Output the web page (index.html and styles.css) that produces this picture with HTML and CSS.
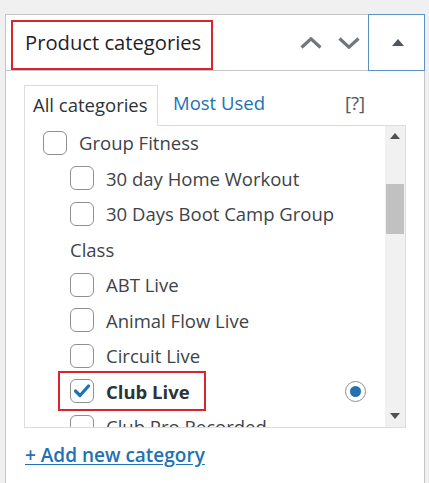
FILE: index.html
```html
<!DOCTYPE html>
<html lang="en">
<head>
<meta charset="utf-8">
<title>Product categories</title>
<link rel="stylesheet" href="styles.css">
</head>
<body>
<div class="postbox">
  <div class="postbox-header">
    <div class="title-wrap"><h2 class="hndle">Product categories</h2></div>
    <div class="actions">
      <button class="order-btn up" aria-label="Move up">
        <svg width="22" height="12" viewBox="0 0 22 12"><polyline points="1.5,10.5 11,1.8 20.5,10.5" fill="none" stroke="#72777c" stroke-width="3.2"/></svg>
      </button>
      <button class="order-btn down" aria-label="Move down">
        <svg width="22" height="12" viewBox="0 0 22 12"><polyline points="1.5,1.5 11,10.2 20.5,1.5" fill="none" stroke="#72777c" stroke-width="3.2"/></svg>
      </button>
      <button class="toggle-btn" aria-label="Toggle panel">
        <svg width="12" height="7" viewBox="0 0 12 7"><polygon points="6,0 12,7 0,7" fill="#50575e"/></svg>
      </button>
    </div>
  </div>
  <div class="inside">
    <ul class="tabs">
      <li class="tab active">All categories</li>
      <li class="tab"><a class="tab-link" href="#">Most Used</a></li>
      <li class="help">[?]</li>
    </ul>
    <div class="tabs-panel">
      <div class="viewport">
        <ul class="checklist">
          <li class="row"><span class="cb"></span><span class="label">Group Fitness</span></li>
          <li class="row lvl1"><span class="cb"></span><span class="label">30 day Home Workout</span></li>
          <li class="row lvl1"><span class="cb"></span><span class="label">30 Days Boot Camp Group</span></li>
          <li class="row lvl1"><span class="plain">Class</span></li>
          <li class="row lvl1"><span class="cb"></span><span class="label">ABT Live</span></li>
          <li class="row lvl1"><span class="cb"></span><span class="label">Animal Flow Live</span></li>
          <li class="row lvl1"><span class="cb"></span><span class="label">Circuit Live</span></li>
          <li class="row lvl1 selected">
            <span class="highlight">
              <span class="cb checked"><svg width="22" height="22" viewBox="0 0 22 22"><polyline points="4.5,11 9,15.5 17.5,6" fill="none" stroke="#2271b1" stroke-width="3.2" stroke-linecap="round" stroke-linejoin="round"/></svg></span>
              <span class="label bold">Club Live</span>
            </span>
            <span class="radio"><span class="dot"></span></span>
          </li>
          <li class="row lvl1"><span class="cb"></span><span class="label">Club Pro Recorded</span></li>
        </ul>
      </div>
      <div class="scrollbar">
        <div class="sb-btn"><svg width="10" height="6" viewBox="0 0 10 6"><polygon points="5,0 10,6 0,6" fill="#505050"/></svg></div>
        <div class="sb-track"><div class="sb-thumb"></div></div>
        <div class="sb-btn bottom"><svg width="10" height="6" viewBox="0 0 10 6"><polygon points="0,0 10,0 5,6" fill="#505050"/></svg></div>
      </div>
    </div>
    <a class="add-new" href="#">+ Add new category</a>
  </div>
</div>
</body>
</html>
```

FILE: styles.css
```css
* { box-sizing: border-box; }
html, body { margin: 0; padding: 0; }
body {
  background: #f0f0f1;
  font-family: "Open Sans", "Noto Sans", sans-serif;
  color: #3c434a;
  width: 429px;
  height: 483px;
  overflow: hidden;
}
.postbox {
  margin: 14px 0 0 5px;
  width: 420px;
  height: 520px;
  background: #fff;
  border: 1px solid #c3c4c7;
}
.postbox-header {
  display: flex;
  justify-content: space-between;
  height: 56px;
  border-bottom: 1px solid #c3c4c7;
}
.title-wrap {
  align-self: flex-end;
  margin-left: 5px;
  width: 202px;
  height: 50px;
  border: 2px solid #d9232d;
  padding: 0 0 5px 12px;
}
.hndle {
  margin: 0;
  font-size: 20.2px;
  font-weight: 400;
  line-height: 41px;
  color: #1d2327;
  white-space: nowrap;
}
.actions {
  display: flex;
  margin: -1px -1px -1px 0;
}
.order-btn, .toggle-btn {
  border: 0;
  background: transparent;
  padding: 0;
  display: flex;
  align-items: center;
  justify-content: center;
  cursor: pointer;
}
.order-btn { width: 38px; }
.order-btn.up { width: 39px; }
.toggle-btn {
  width: 57px;
  height: 57px;
  border: 1.5px solid #5a92c4;
  padding-left: 3px;
  padding-bottom: 1px;
}
.inside {
  padding: 0 18px;
}
.tabs {
  list-style: none;
  margin: 13px 0 0 0;
  padding: 0;
  display: flex;
  align-items: flex-end;
  font-size: 18.5px;
}
.tab {
  height: 41px;
  line-height: 38px;
}
.tab.active {
  position: relative;
  z-index: 1;
  margin-bottom: -1px;
  border: 1px solid #dcdcde;
  border-bottom-color: #fff;
  background: #fff;
  padding: 0 8px;
  width: 134px;
  white-space: nowrap;
  color: #2c3338;
}
.tab-link {
  display: block;
  margin-left: 15px;
  color: #2271b1;
  text-decoration: none;
}
.help {
  margin-left: auto;
  margin-right: 41px;
  height: 41px;
  line-height: 38px;
  color: #50575e;
}
.tabs-panel {
  height: 303px;
  border: 1px solid #dcdcde;
  display: flex;
  background: #fff;
}
.viewport {
  flex: 1;
  overflow: hidden;
}
.checklist {
  list-style: none;
  margin: -1.25px 0 0 0;
  padding: 0 0 0 18px;
  font-size: 18.5px;
}
.row {
  height: 35.5px;
  display: flex;
  align-items: center;
  white-space: nowrap;
}
.row.lvl1 { padding-left: 27px; }
.cb {
  flex: none;
  width: 24px;
  height: 24px;
  border: 1px solid #8c8f94;
  border-radius: 6px;
  background: #fff;
  display: flex;
  align-items: center;
  justify-content: center;
}
.label { margin-left: 12px; color: #3c434a; }
.label.bold { font-weight: 700; color: #2c3338; }
.plain { color: #3c434a; }
.highlight {
  display: flex;
  align-items: center;
  height: 40px;
  width: 148px;
  margin-left: -12px;
  padding-left: 10px;
  border: 2px solid #d9232d;
}
.radio {
  margin-left: auto;
  margin-right: 19px;
  width: 21px;
  height: 21px;
  border: 1px solid #8c8f94;
  border-radius: 50%;
  display: flex;
  align-items: center;
  justify-content: center;
}
.dot {
  width: 11px;
  height: 11px;
  border-radius: 50%;
  background: #2271b1;
}
.scrollbar {
  width: 20px;
  background: #f1f1f1;
  display: flex;
  flex-direction: column;
}
.sb-btn {
  height: 20px;
  display: flex;
  align-items: center;
  justify-content: center;
}
.sb-btn.bottom { height: 22px; }
.sb-track { flex: 1; }
.sb-thumb {
  margin: 38px 1px 0 1px;
  height: 50px;
  background: #c1c1c1;
}
.add-new {
  display: inline-block;
  margin-top: 12px;
  margin-left: 1px;
  font-size: 19px;
  font-weight: 600;
  line-height: 30px;
  color: #2271b1;
  text-decoration: underline;
  text-underline-offset: 2px;
}
```
